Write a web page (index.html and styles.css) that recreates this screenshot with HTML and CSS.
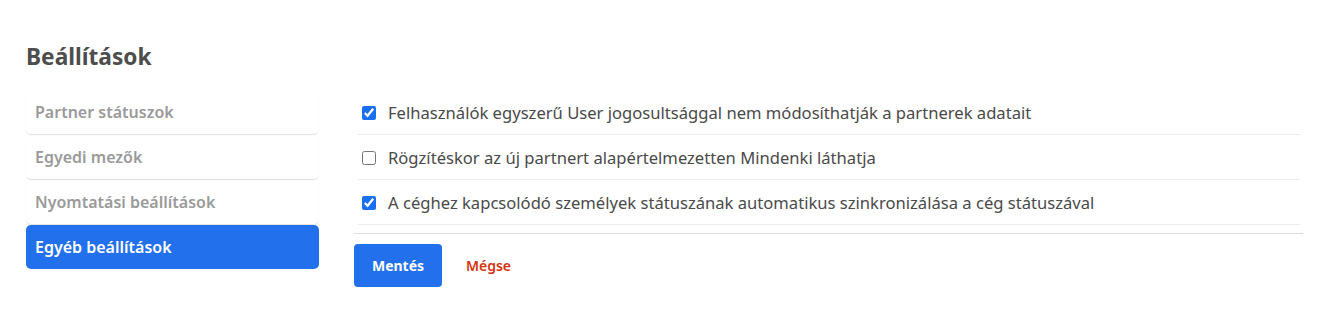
FILE: index.html
```html
<!DOCTYPE html>
<html lang="hu">
<head>
<meta charset="utf-8">
<title>Beállítások</title>
<link rel="stylesheet" href="styles.css">
</head>
<body>
<div class="page">
  <h1 class="title">Beállítások</h1>
  <div class="layout">
    <nav class="sidebar">
      <a class="nav-item">Partner státuszok</a>
      <a class="nav-item">Egyedi mezők</a>
      <a class="nav-item">Nyomtatási beállítások</a>
      <a class="nav-item active">Egyéb beállítások</a>
    </nav>
    <div class="content">
      <div class="options">
        <label class="option"><input type="checkbox" checked><span>Felhasználók egyszerű User jogosultsággal nem módosíthatják a partnerek adatait</span></label>
        <label class="option"><input type="checkbox"><span>Rögzítéskor az új partnert alapértelmezetten Mindenki láthatja</span></label>
        <label class="option"><input type="checkbox" checked><span>A céghez kapcsolódó személyek státuszának automatikus szinkronizálása a cég státuszával</span></label>
      </div>
      <div class="actions">
        <button class="btn-save">Mentés</button>
        <button class="btn-cancel">Mégse</button>
      </div>
    </div>
  </div>
</div>
</body>
</html>
```
FILE: styles.css
```css
* { box-sizing: border-box; }
html, body { margin: 0; padding: 0; background: #fff; }
body {
  font-family: "Noto Sans", "Open Sans", sans-serif;
  color: #555;
}
.page {
  padding: 40px 22px 0 26px;
}
.title {
  margin: 0 0 17px 0;
  font-size: 22.7px;
  font-weight: 700;
  color: #4d4d4d;
  line-height: 33px;
}
.layout {
  display: flex;
  gap: 35px;
}
.sidebar {
  width: 293px;
  display: flex;
  flex-direction: column;
  gap: 1px;
}
.nav-item {
  display: block;
  height: 44px;
  line-height: 44px;
  padding: 0 9px;
  font-size: 16px;
  font-weight: 600;
  color: #9a9a9a;
  border-radius: 5px;
  box-shadow: 0 1px 1px rgba(0,0,0,0.12);
}
.nav-item.active {
  background: #2370ec;
  color: #fff;
  box-shadow: none;
}
.content {
  width: 949px;
}
.options {
  padding: 0 3px 0 4px;
}
.option {
  display: flex;
  align-items: center;
  height: 45px;
  padding-left: 4px;
  border-bottom: 1px solid #ececec;
  font-size: 16.6px;
  color: #4a4a4a;
  padding-top: 1px;
}
.option input {
  width: 14px;
  height: 14px;
  margin: 0 12px 0 0;
  accent-color: #1a6ff0;
}
.actions {
  border-top: 1px solid #dcdcdc;
  margin-top: 8px;
  padding-top: 10px;
  display: flex;
  align-items: center;
  gap: 24px;
}
.btn-save {
  width: 88px;
  height: 43px;
  border: none;
  border-radius: 4px;
  background: #2370ec;
  color: #fff;
  font-family: inherit;
  font-size: 14px;
  font-weight: 700;
}
.btn-cancel {
  border: none;
  background: none;
  padding: 0;
  font-family: inherit;
  font-size: 14px;
  font-weight: 600;
  color: #d6330f;
}
```
